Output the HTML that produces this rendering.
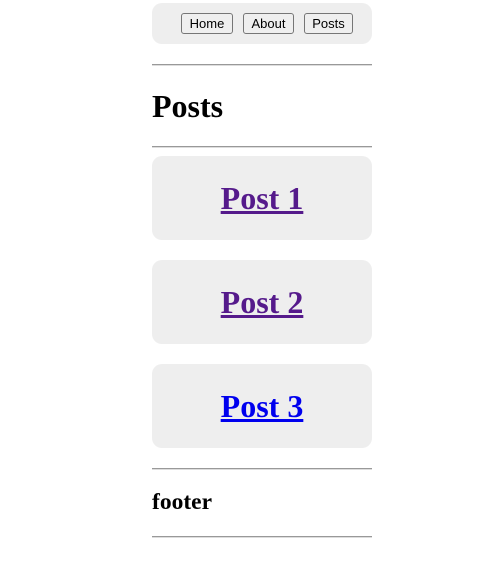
<!DOCTYPE html>
<html><head><style>
body{margin:0;background:#fff;font-family:"Liberation Serif",serif;}
.w{position:absolute;left:152px;width:220px;}
.nav{top:3px;height:41px;background:#eee;border-radius:10px;}
.b{position:absolute;top:10px;height:21px;box-sizing:border-box;border:1px solid #767676;border-radius:3px;background:#efefef;font:13px "Liberation Sans",sans-serif;line-height:19px;text-align:center;color:#000;}
.hr{height:0;border-top:1px solid #999;border-bottom:1px solid #ddd;}
.card{height:84px;background:#eee;border-radius:10px;text-align:center;font-weight:bold;font-size:32px;line-height:84px;}
.card a{text-decoration:underline;}
h1{position:absolute;left:152px;top:88px;margin:0;font-size:32px;line-height:36px;}
.f{position:absolute;left:152px;top:489px;font-weight:bold;font-size:23.5px;line-height:26px;}
</style></head><body>
<div class="w nav">
<div class="b" style="left:29px;width:52px">Home</div>
<div class="b" style="left:91px;width:51px">About</div>
<div class="b" style="left:152px;width:49px">Posts</div>
</div>
<div class="w hr" style="top:64px"></div>
<h1>Posts</h1>
<div class="w hr" style="top:146px"></div>
<div class="w card" style="top:156px"><a style="color:#551a8b">Post 1</a></div>
<div class="w card" style="top:260px"><a style="color:#551a8b">Post 2</a></div>
<div class="w card" style="top:364px"><a style="color:#0000ee">Post 3</a></div>
<div class="w hr" style="top:468px"></div>
<div class="f">footer</div>
<div class="w hr" style="top:536px"></div>
</body></html>
